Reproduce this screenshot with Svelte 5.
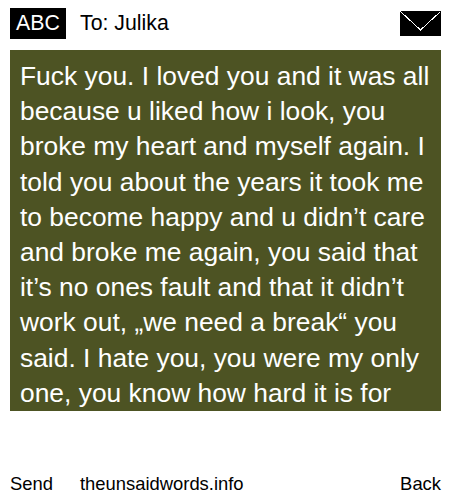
<script>
    const message = `Fuck you. I loved you and it was all because u liked how i look, you broke my heart and myself again. I told you about the years it took me to become happy and u didn’t care and broke me again, you said that it’s no ones fault and that it didn’t work out, „we need a break“ you said. I hate you, you were my only one, you know how hard it is for`;
</script>

<div class="screen">
    <header>
        <span class="abc">ABC</span>
        <span class="to">To: Julika</span>
        <svg class="envelope" width="41" height="25" viewBox="0 0 41 25" aria-hidden="true">
            <rect width="41" height="25" fill="#000" />
            <path d="M0.5 0.5 L20.5 19 L40.5 0.5" fill="none" stroke="#fff" stroke-width="1" shape-rendering="crispEdges" />
        </svg>
    </header>

    <main class="message">
        <p>{message}</p>
    </main>

    <footer>
        <span class="send">Send</span>
        <span class="site">theunsaidwords.info</span>
        <span class="back">Back</span>
    </footer>
</div>

<style>
    :global(body) {
        margin: 0;
        background: #fff;
    }

    .screen {
        width: 450px;
        height: 500px;
        box-sizing: border-box;
        padding: 8px 9px 0 10px;
        display: flex;
        flex-direction: column;
        font-family: "Liberation Sans", Arial, sans-serif;
        color: #000;
        overflow: hidden;
    }

    header {
        display: flex;
        align-items: center;
        height: 31px;
        font-size: 21.3px;
        line-height: 28px;
    }

    .abc {
        background: #000;
        color: #fff;
        width: 56px;
        height: 31px;
        line-height: 30px;
        text-align: center;
    }

    .to {
        margin-left: 14px;
        flex: 1;
        margin-top: -2px;
    }

    .envelope {
        display: block;
    }

    .message {
        margin-top: 11px;
        height: 361px;
        box-sizing: border-box;
        background: #4d5323;
        color: #fff;
        padding: 9px 10px 0;
        overflow: hidden;
    }

    .message p {
        margin: 0;
        font-size: 26.4px;
        line-height: 35.2px;
    }

    footer {
        margin-top: 62px;
        display: flex;
        font-size: 18.4px;
        line-height: 22px;
    }

    .send {
        width: 70px;
    }

    .site {
        flex: 1;
    }
</style>
